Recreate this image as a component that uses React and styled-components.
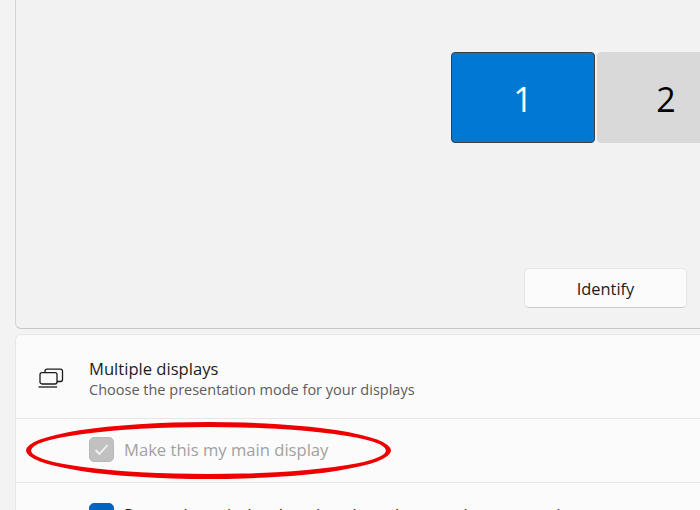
import React from 'react';
import styled, { createGlobalStyle } from 'styled-components';

const Global = createGlobalStyle`
    html, body {
        margin: 0;
        padding: 0;
        background: #f3f3f3;
    }
`
const Page = styled.div`
    position: relative;
    width: 700px;
    height: 510px;
    overflow: hidden;
    padding-left: 15px;
    box-sizing: border-box;
    display: flex;
    flex-direction: column;
    gap: 5px;
    font-family: "Open Sans", "Noto Sans", sans-serif;
    color: #1b1b1b;
`
const Arrangement = styled.div`
    flex: none;
    height: 329px;
    box-sizing: border-box;
    background: #f2f2f2;
    border-left: 1px solid #d4d4d4;
    border-bottom: 1px solid #c6c6c6;
    border-bottom-left-radius: 6px;
    padding: 52px 13px 20px 0;
    display: flex;
    flex-direction: column;
    align-items: flex-end;
    justify-content: space-between;
`
const Monitors = styled.div`
    display: flex;
    gap: 2px;
    margin-right: -13px;
    width: 249px;
`
const Monitor = styled.div`
    flex: none;
    width: ${(p) => (p.$active ? '144px' : '138px')};
    height: 91px;
    box-sizing: border-box;
    border-radius: 4px;
    display: flex;
    align-items: center;
    justify-content: center;
    padding-top: 3px;
    font-size: 34px;
    background: ${(p) => (p.$active ? '#0078d4' : '#d9d9d9')};
    color: ${(p) => (p.$active ? '#fff' : '#000')};
    border: 1px solid ${(p) => (p.$active ? '#3a3f44' : '#d9d9d9')};
`
const IdentifyButton = styled.button`
    width: 163px;
    height: 40px;
    box-sizing: border-box;
    background: #fbfbfb;
    border: 1px solid #e5e5e5;
    border-bottom-color: #cccccc;
    border-radius: 5px;
    font-family: inherit;
    font-size: 16.4px;
    color: #1b1b1b;
    padding: 1px 0 0;
`
const Card = styled.div`
    flex: 1;
    background: #fbfbfb;
    border: 1px solid #e6e6e6;
    border-right: none;
    border-bottom: none;
    border-top-left-radius: 6px;
    display: flex;
    flex-direction: column;
`
const Header = styled.div`
    height: 84px;
    flex: none;
    box-sizing: border-box;
    display: flex;
    align-items: center;
    gap: 25px;
    padding: 4px 0 0 22px;
    border-bottom: 1px solid #e6e6e6;
`
const TitleBlock = styled.div`
    display: flex;
    flex-direction: column;
`
const Title = styled.div`
    font-size: 16.6px;
    line-height: 21px;
    color: #1b1b1b;
`
const Subtitle = styled.div`
    font-size: 14.5px;
    line-height: 21px;
    color: #5c5c5c;
`
const OptionRow = styled.div`
    flex: none;
    height: ${(p) => (p.$last ? '60px' : '64px')};
    box-sizing: border-box;
    display: flex;
    align-items: ${(p) => (p.$last ? 'flex-start' : 'center')};
    padding-top: ${(p) => (p.$last ? '20px' : '0')};
    padding-bottom: ${(p) => (p.$last ? '0' : '2px')};
    gap: 10px;
    padding-left: 73px;
    border-bottom: ${(p) => (p.$last ? 'none' : '1px solid #e6e6e6')};
`
const Checkbox = styled.div`
    flex: none;
    width: 25px;
    height: 25px;
    box-sizing: border-box;
    border-radius: 5px;
    display: flex;
    align-items: center;
    justify-content: center;
    background: ${(p) => (p.$disabled ? '#c1c1c1' : '#0067c0')};
    border: 1px solid ${(p) => (p.$disabled ? '#b8b8b8' : '#0067c0')};
`
const OptionLabel = styled.span`
    font-size: 16.6px;
    white-space: nowrap;
    color: ${(p) => (p.$disabled ? '#a1a1a1' : '#1b1b1b')};
`
const Annotation = styled.div`
    position: absolute;
    left: 26px;
    top: 422px;
    width: 365px;
    height: 57px;
    box-sizing: border-box;
    border: 5px solid #ee0000;
    border-radius: 50%;
    pointer-events: none;
`

const DisplaysIcon = () => (
    <svg width="26" height="22" viewBox="0 0 26 22" fill="none" stroke="#1b1b1b" strokeWidth="1.3">
        <path d="M7 4.5 V3.2 a2 2 0 0 1 2 -2 h13.5 a2 2 0 0 1 2 2 v8.3 a2 2 0 0 1 -2 2 H19" />
        <rect x="2" y="4.6" width="17" height="11.4" rx="2" />
        <path d="M0.5 19 H19" />
    </svg>
)

const Check = ({ color }) => (
    <svg width="15" height="13" viewBox="0 0 15 13" fill="none" stroke={color} strokeWidth="1.8">
        <path d="M1.5 7 L5.5 11 L13.5 2" />
    </svg>
)

const App = () => {
    return (
        <Page>
            <Global />
            <Arrangement>
                <Monitors>
                    <Monitor $active>1</Monitor>
                    <Monitor>2</Monitor>
                </Monitors>
                <IdentifyButton>Identify</IdentifyButton>
            </Arrangement>
            <Card>
                <Header>
                    <DisplaysIcon />
                    <TitleBlock>
                        <Title>Multiple displays</Title>
                        <Subtitle>Choose the presentation mode for your displays</Subtitle>
                    </TitleBlock>
                </Header>
                <OptionRow>
                    <Checkbox $disabled><Check color="#f4f4f4" /></Checkbox>
                    <OptionLabel $disabled>Make this my main display</OptionLabel>
                </OptionRow>
                <OptionRow $last>
                    <Checkbox><Check color="#fff" /></Checkbox>
                    <OptionLabel>Remember window locations based on monitor connection</OptionLabel>
                </OptionRow>
            </Card>
            <Annotation />
        </Page>
    )
}

export default App;
